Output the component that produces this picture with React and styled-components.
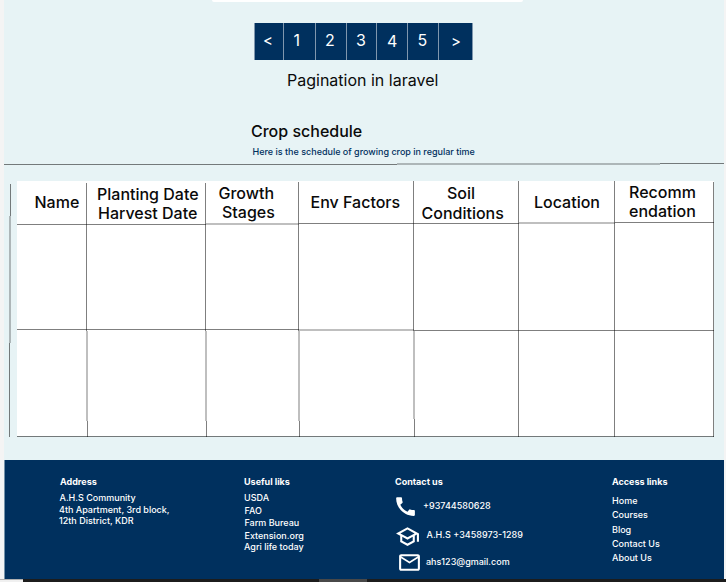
import React from 'react';
import styled, { createGlobalStyle, css } from 'styled-components';
import { MdCall, MdOutlineSchool, MdMailOutline } from 'react-icons/md';

const rule = 'rgba(0, 0, 0, 0.5)';
const soft = 'rgba(0, 0, 0, 0.25)';
const navy = '#00305e';

const GlobalStyle = createGlobalStyle`
  * { box-sizing: border-box; }
  html, body { margin: 0; background: #f4f4f4; overflow: hidden; }
  body { font-family: Inter, 'Liberation Sans', sans-serif; color: #0a0a0a; }
`;

const Window = styled.div`
  display: flex;
  flex-direction: column;
  width: 726px;
  height: 582px;
`;

const Page = styled.main`
  display: flex;
  flex-direction: column;
  width: 720px;
  height: 579px;
  margin-left: 4px;
  background: #e7f3f5;
`;

const CardEdge = styled.div`
  width: 311px;
  height: 2px;
  margin-left: 208px;
  background: #fff;
  border-radius: 0 0 2px 2px;
`;

const Pagination = styled.nav`
  display: flex;
  width: 219px;
  height: 37px;
  margin: 21px 0 0 250px;
  background: ${navy};
  border-right: 1px solid #8097ae;
`;

const PageButton = styled.button`
  display: flex;
  align-items: flex-start;
  width: ${(p) => p.$width}px;
  height: 37px;
  padding: ${(p) => p.$top}px 0 0 ${(p) => p.$left}px;
  border: 0;
  border-left: 1px solid #8097ae;
  background: none;
  color: #fff;
  font: 400 ${(p) => p.$size || 16}px/20px Inter, sans-serif;
`;

const Caption = styled.p`
  margin: 10px 0 0 283px;
  font-size: 16px;
  line-height: 20px;
`;

const Title = styled.h2`
  margin: 31px 0 0 247px;
  font-size: 16px;
  font-weight: 500;
  line-height: 20px;
`;

const Subtitle = styled.p`
  margin: 5px 0 0 248.5px;
  font-size: 9px;
  font-weight: 500;
  line-height: 12px;
  color: ${navy};
`;

const Divider = styled.div`
  flex: none;
  width: 720px;
  height: 2px;
  margin-top: 5px;
  background:
    linear-gradient(${rule}, ${rule}) 0 1px / 393px 1px no-repeat,
    linear-gradient(${soft}, ${soft}) 393px 0 / 263px 2px no-repeat,
    linear-gradient(${rule}, ${rule}) 656px 0 / 64px 1px no-repeat;
`;

const Schedule = styled.section`
  display: flex;
  margin-top: 16px;
`;

const SideRule = styled.div`
  width: 2px;
  height: 253px;
  margin: 3px 6px 0 5px;
  background:
    linear-gradient(${rule}, ${rule}) 1px 0 / 1px 32px no-repeat,
    linear-gradient(${soft}, ${soft}) 0 32px / 2px 127px no-repeat,
    linear-gradient(${rule}, ${rule}) 0 159px / 1px 94px no-repeat;
`;

const Table = styled.div`
  width: 697px;
  height: 256px;
  background: linear-gradient(#fff, #fff) 0 0 / 697px 255px no-repeat;
`;

const Row = styled.div`
  display: grid;
  grid-template-columns: ${(p) => p.$columns};
  height: ${(p) => p.$height}px;
`;

/* Rules are one pixel wide; a sloping stretch is spread over two pixels. */
const Cell = styled.div`
  padding: ${(p) => p.$top || 0}px 0 0 ${(p) => p.$left || 0}px;
  font-size: 16px;
  font-weight: 500;
  line-height: ${(p) => p.$leading || 19}px;
  white-space: nowrap;
  ${({ $skip = 0, $y, $slope, $lean = 0 }) => css`
    background:
      linear-gradient(${soft}, ${soft}) 100% 0 / 2px ${$lean}px no-repeat,
      linear-gradient(${rule}, ${rule}) 100% ${$skip + $lean}px / 1px 100% no-repeat,
      linear-gradient(${$slope ? soft : rule}, ${$slope ? soft : rule}) 0 ${$y}px / 100% ${$slope ? 2 : 1}px no-repeat;
  `}
`;

const Line = styled.div`
  padding-left: ${(p) => p.$indent || 0}px;
`;

const Footer = styled.footer`
  display: flex;
  width: 720px;
  height: 119px;
  margin-top: 23px;
  background: ${navy};
  border-left: 1px solid #7391a8;
  color: #fff;
  font-size: 9px;
  font-weight: 500;
  line-height: 12px;
  white-space: nowrap;
`;

const FooterColumn = styled.div`
  width: ${(p) => p.$width}px;
  padding-top: 16px;
`;

const FooterTitle = styled.h3`
  margin: 0;
  font-size: 9px;
  font-weight: 700;
  line-height: 12px;
  padding-left: ${(p) => p.$indent || 0}px;
`;

const FooterItem = styled.div`
  margin-top: ${(p) => p.$gap}px;
  padding-left: ${(p) => p.$indent || 0}px;
`;

const Contact = styled.div`
  display: flex;
  gap: ${(p) => p.$gap}px;
  height: 25px;
  margin: ${(p) => p.$top}px 0 0 ${(p) => p.$left}px;
  svg { flex: none; width: 25px; height: 25px; }
`;

const ContactText = styled.span`
  padding-top: ${(p) => p.$top}px;
`;

const Taskbar = styled.div`
  display: flex;
  height: 3px;
  background: #1c1c1c;
`;

const TaskbarStart = styled.div`
  width: 23px;
  background: #f0f0f0;
  border-top: 1px solid #b0b0b0;
`;

const TaskbarActive = styled.div`
  width: 48px;
  margin-left: 296px;
  background: #484848;
`;

const pages = [
  { label: '<', width: 29, left: 8, top: 8, size: 15 },
  { label: '1', width: 32, left: 9.5, top: 7 },
  { label: '2', width: 31, left: 9, top: 7 },
  { label: '3', width: 30, left: 9, top: 7 },
  { label: '4', width: 31, left: 10, top: 8 },
  { label: '5', width: 31, left: 9.5, top: 7 },
  { label: '>', width: 34, left: 12, top: 9, size: 15 },
];

const headers = [
  { lines: [['Name']], left: 17.5, top: 12, y: 43, skip: 2 },
  { lines: [['Planting Date'], ['Harvest Date', 1]], left: 10, top: 4, y: 43, skip: 2 },
  { lines: [['Growth'], ['Stages', 3.5]], left: 12.5, top: 3, y: 42, skip: 1, slope: true },
  { lines: [['Env Factors']], left: 11.5, top: 12, y: 42 },
  { lines: [['Soil', 25.5], ['Conditions']], left: 7.5, top: 2, y: 42, leading: 20 },
  { lines: [['Location']], left: 15, top: 12, y: 41, slope: true },
  { lines: [['Recomm'], ['endation']], left: 14, top: 2, y: 41, skip: 1 },
];

const upper = '70px 119px 93px 115px 105px 96px 99px';
const lower = '71px 119px 93px 115px 104px 96px 99px';
const middleRules = [
  { y: 104 }, { y: 104 }, { y: 104 }, { y: 104, slope: true }, { y: 105 }, { y: 105 }, { y: 105 },
];
const bottomLeans = [90, 90, 90, 88, 0, 0, 0];

export default function App() {
  return (
    <Window>
      <GlobalStyle />
      <Page>
        <CardEdge />
        <Pagination>
          {pages.map((p) => (
            <PageButton key={p.label} $width={p.width} $left={p.left} $top={p.top} $size={p.size}>
              {p.label}
            </PageButton>
          ))}
        </Pagination>
        <Caption>Pagination in laravel</Caption>
        <Title>Crop schedule</Title>
        <Subtitle>Here is the schedule of growing crop in regular time</Subtitle>
        <Divider />
        <Schedule>
          <SideRule />
          <Table>
            <Row $columns={upper} $height={44}>
              {headers.map((h) => (
                <Cell key={h.lines[0][0]} $left={h.left} $top={h.top} $y={h.y} $skip={h.skip} $slope={h.slope} $leading={h.leading}>
                  {h.lines.map(([text, indent]) => (
                    <Line key={text} $indent={indent}>{text}</Line>
                  ))}
                </Cell>
              ))}
            </Row>
            <Row $columns={upper} $height={106}>
              {middleRules.map((r, i) => <Cell key={i} $y={r.y} $slope={r.slope} />)}
            </Row>
            <Row $columns={lower} $height={106}>
              {bottomLeans.map((lean, i) => <Cell key={i} $y={105} $lean={lean} />)}
            </Row>
          </Table>
        </Schedule>
        <Footer>
          <FooterColumn $width={54} />
          <FooterColumn $width={185}>
            <FooterTitle $indent={1}>Address</FooterTitle>
            <FooterItem $gap={4} $indent={0.5}>A.H.S Community</FooterItem>
            <FooterItem $gap={0}>4th Apartment, 3rd block,</FooterItem>
            <FooterItem $gap={-1}>12th District, KDR</FooterItem>
          </FooterColumn>
          <FooterColumn $width={151}>
            <FooterTitle>Useful liks</FooterTitle>
            <FooterItem $gap={4}>USDA</FooterItem>
            <FooterItem $gap={1} $indent={0.5}>FAO</FooterItem>
            <FooterItem $gap={0} $indent={0.5}>Farm Bureau</FooterItem>
            <FooterItem $gap={1} $indent={0.5}>Extension.org</FooterItem>
            <FooterItem $gap={-1}>Agri life today</FooterItem>
          </FooterColumn>
          <FooterColumn $width={217}>
            <FooterTitle>Contact us</FooterTitle>
            <Contact $top={6} $left={-2.5} $gap={5.5}>
              <MdCall />
              <ContactText $top={6}>+93744580628</ContactText>
            </Contact>
            <Contact $top={5} $left={0} $gap={6.5}>
              <MdOutlineSchool />
              <ContactText $top={5}>A.H.S +3458973-1289</ContactText>
            </Contact>
            <Contact $top={1} $left={2} $gap={4}>
              <MdMailOutline />
              <ContactText $top={6}>ahs123@gmail.com</ContactText>
            </Contact>
          </FooterColumn>
          <FooterColumn $width={80}>
            <FooterTitle>Access links</FooterTitle>
            <FooterItem $gap={7}>Home</FooterItem>
            <FooterItem $gap={2}>Courses</FooterItem>
            <FooterItem $gap={3}>Blog</FooterItem>
            <FooterItem $gap={2}>Contact Us</FooterItem>
            <FooterItem $gap={2}>About Us</FooterItem>
          </FooterColumn>
        </Footer>
      </Page>
      <Taskbar>
        <TaskbarStart />
        <TaskbarActive />
      </Taskbar>
    </Window>
  );
}
